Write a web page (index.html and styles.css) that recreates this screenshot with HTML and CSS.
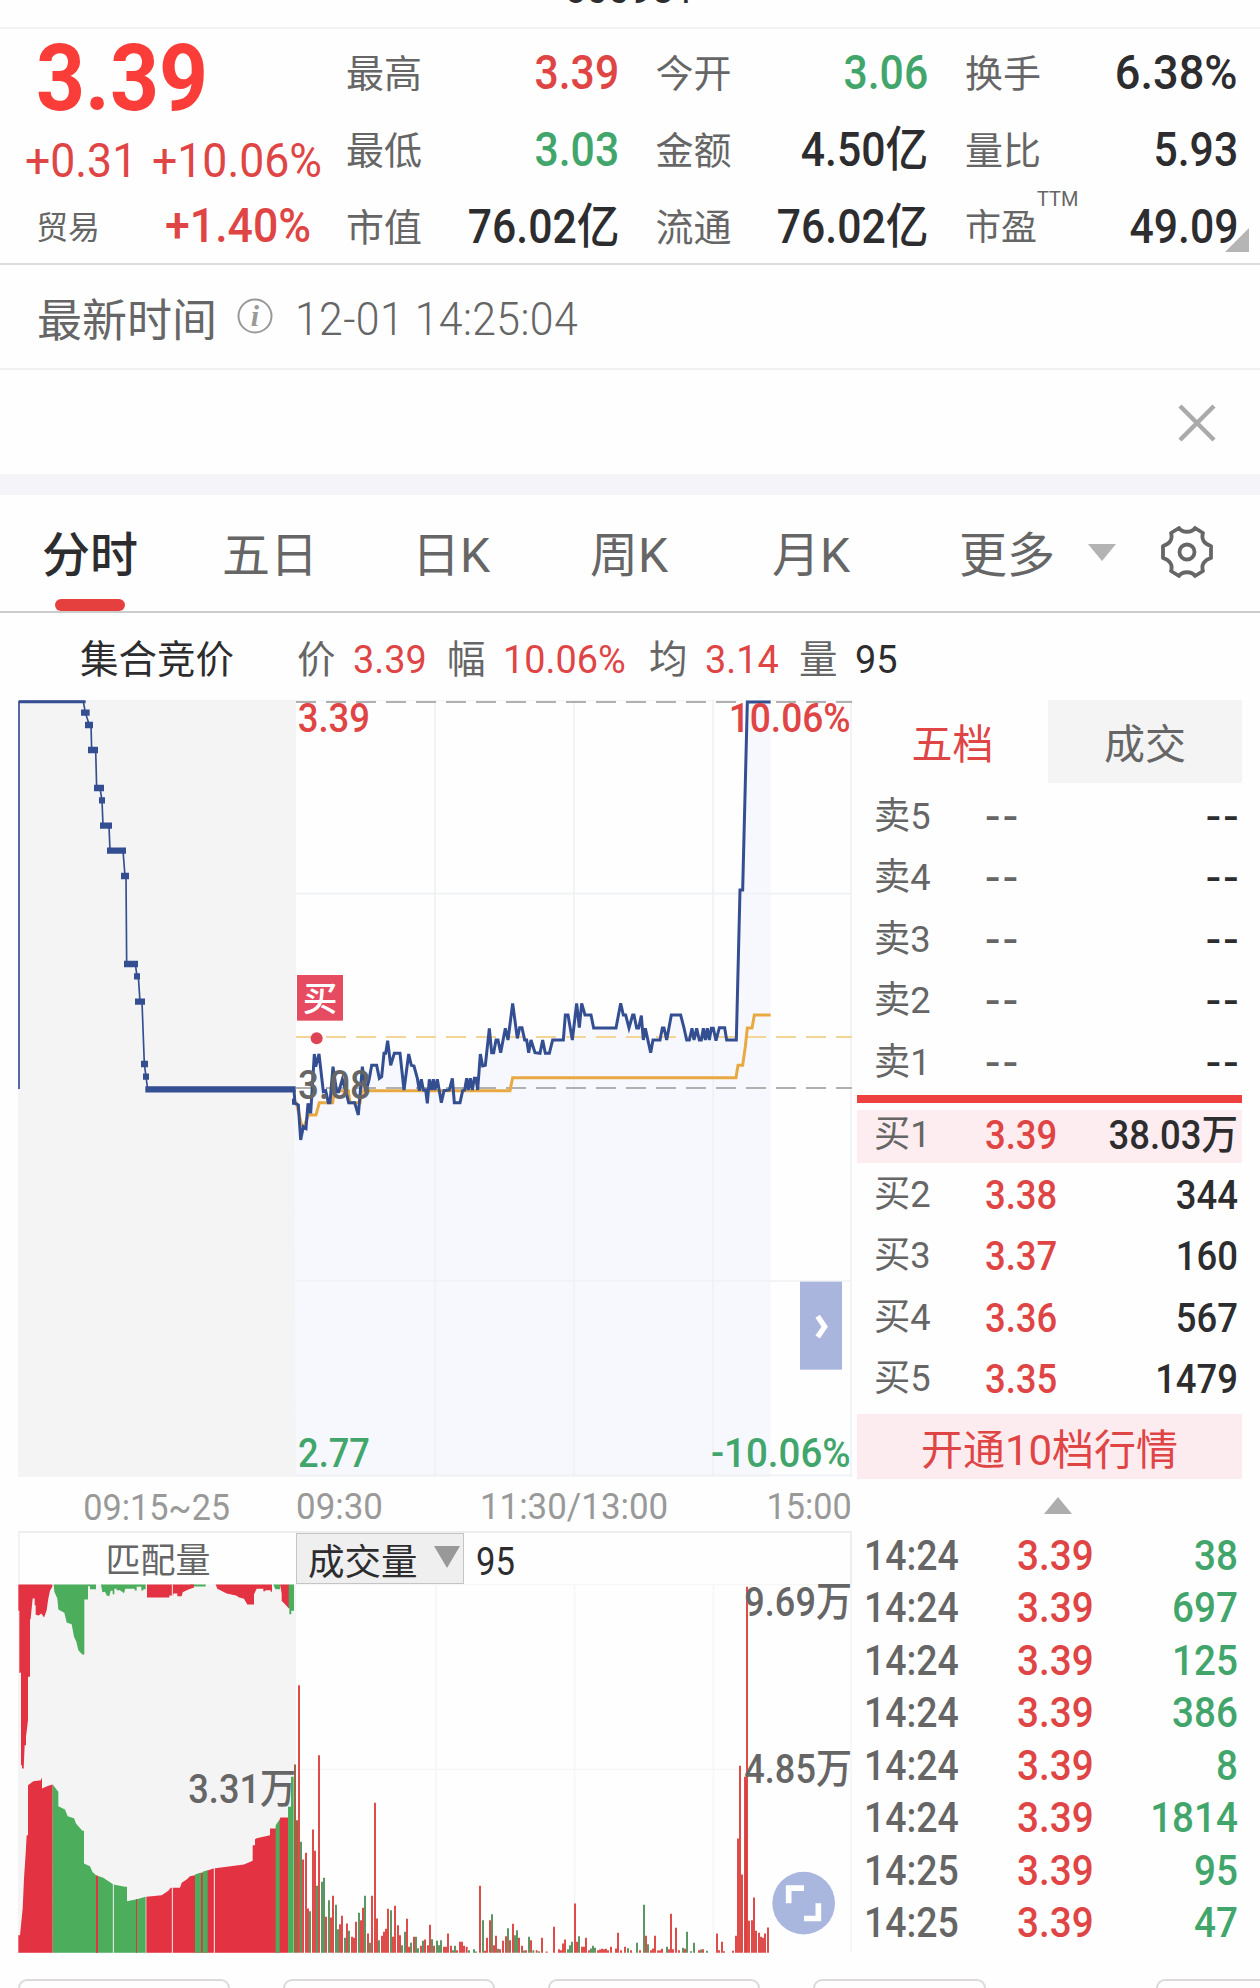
FILE: index.html
```
<!DOCTYPE html>
<html lang="zh-CN">
<head>
  <meta charset="UTF-8" />
  <meta name="viewport" content="width=device-width, initial-scale=1" />
  <title>600981 分时</title>
  <link rel="stylesheet" href="styles.css">
</head>
<body>

  <header class="code-bar"><span class="code">600981</span></header>

  <section class="quote">
    <div class="price-box">
      <div class="price"><span class="num">3.39</span></div>
      <div class="change"><span class="num">+0.31</span><span class="num">+10.06%</span></div>
      <div class="sector"><span>贸易</span><span class="num">+1.40%</span></div>
    </div>
    <div class="stats">
      <div class="stat"><span>最高</span><b class="num up">3.39</b></div>
      <div class="stat"><span>今开</span><b class="num down">3.06</b></div>
      <div class="stat"><span>换手</span><b class="num pct">6.38%</b></div>
      <div class="stat"><span>最低</span><b class="num down">3.03</b></div>
      <div class="stat"><span>金额</span><b class="num">4.50亿</b></div>
      <div class="stat"><span>量比</span><b class="num">5.93</b></div>
      <div class="stat"><span>市值</span><b class="num">76.02亿</b></div>
      <div class="stat"><span>流通</span><b class="num">76.02亿</b></div>
      <div class="stat pe"><span>市盈<sup>TTM</sup></span><b class="num">49.09</b></div>
    </div>
    <i class="corner"></i>
  </section>

  <section class="latest">
    <span>最新时间</span>
    <svg class="info" viewBox="0 0 36 36"><circle cx="18" cy="18" r="16.5" /><text x="18" y="28">i</text></svg>
    <span class="num">12-01 14:25:04</span>
  </section>

  <section class="notice">
    <svg class="close" viewBox="0 0 38 38"><path d="M2 2L36 36M36 2L2 36" /></svg>
  </section>

  <nav class="tabs">
    <a class="tab active">分时</a>
    <a class="tab">五日</a>
    <a class="tab">日K</a>
    <a class="tab">周K</a>
    <a class="tab">月K</a>
    <a class="tab more">更多</a>
    <i class="arrow-down"></i>
    <svg class="gear" viewBox="0 0 52 52">
      <path d="M18 2C21 7 31 7 34 2L42 7C40 13 43 18 50 20V32C43 34 40 39 42 45L34 50C31 45 21 45 18 50L10 45C12 39 9 34 2 32V20C9 18 12 13 10 7Z" />
      <circle cx="26" cy="26" r="7.5" />
    </svg>
  </nav>

  <div class="summary">
    <span class="auction">集合竞价</span>
    <span class="key">价</span><span class="num up w-price">3.39</span>
    <span class="key">幅</span><span class="num up w-pct">10.06%</span>
    <span class="key">均</span><span class="num up w-price">3.14</span>
    <span class="key">量</span><span class="num">95</span>
  </div>

  <main class="main">
    <div class="charts">
      <svg class="price-chart" viewBox="-786 -780 2502 2331">
        <rect class="auction-bg" x="-786" y="-780" width="834" height="2331" />
        <path class="area" id="area" />
        <path class="grid" d="M465-780V1551M882-780V1551M1299-780V1551M1713-780V1551M48-199H1713M48 963H1713M48 1546H1713M-786-780H1713" />
        <path class="dash" d="M48-774H1716M48 384H1716" />
        <path class="dash cost" d="M48 231H1716" />
        <polyline class="avg" points="48,425 65,495 72,500 85,465 108,465 118,428 158,428 162,392 205,392 210,428 240,428 247,392 690,392 698,353 1368,353 1374,316 1388,316 1396,260 1402,204 1416,204 1423,165 1472,165" />
        <polyline class="line auction-line" points="-783,387 -783,-775 -590,-775 -584,-742 -572,-705 -567,-705 -565,-630 -553,-630 -550,-516 -540,-516 -534,-479 -531,-403 -513,-403 -510,-328 -471,-328 -465,-252 -462,-252 -460,12 -434,12 -429,49 -425,49 -420,125 -414,125 -407,312 -402,350 -397,388" />
        <path class="line auction-dots" d="M-597-742h26M-585-705h24M-576-630h30M-558-516h30M-543-479h18M-540-403h36M-519-328h57M-477-252h24M-468 12h42M-438 49h18M-435 125h30M-417 312h21M-411 350h18M-404 388H47M36 425h12" />
        <polyline class="line" id="line" />
        <path class="line" d="M-783-775H-583" />
        <rect class="buy-tag" x="51" y="45" width="138" height="137" />
        <text class="buy-text" x="120" y="153">买</text>
        <circle class="buy-dot" cx="110" cy="235" r="18" />
        <text class="label up" x="53" y="-684" textLength="217" lengthAdjust="spacingAndGlyphs">3.39</text>
        <text class="label up" x="1346" y="-684" textLength="366" lengthAdjust="spacingAndGlyphs">10.06%</text>
        <text class="label" x="54" y="416" textLength="219" lengthAdjust="spacingAndGlyphs">3.08</text>
        <text class="label down" x="54" y="1521" textLength="216" lengthAdjust="spacingAndGlyphs">2.77</text>
        <text class="label down" x="1293" y="1521" textLength="419" lengthAdjust="spacingAndGlyphs">-10.06%</text>
        <rect class="handle" x="1560" y="965" width="126" height="264" />
        <path class="handle-arrow" d="M1613 1069L1634 1100L1613 1131" />
      </svg>

      <div class="axis">
        <span class="num auction-time">09:15~25</span>
        <div class="times"><span class="num">09:30</span><span class="num mid">11:30/13:00</span><span class="num">15:00</span></div>
      </div>

      <div class="volume-head">
        <span class="match">匹配量</span>
        <span class="select">成交量<i></i></span>
        <span class="num volume-now">95</span>
      </div>

      <svg class="volume-chart" viewBox="-786 342 2502 1106">
        <rect class="auction-bg" x="-786" y="342" width="834" height="1106" />
        <path class="grid" d="M468 342V1448M884 342V1448M1300 342V1448M1713 342V1448M48 898H1713M-786 343H1713" />
        <g transform="translate(-840 0)">
          <path class="red" d="M55 343H157V350L150 362L145 385L140 420L132 442L124 430L116 436L107 434V405H104V385H98L92 445L90 450V620H84V750L78 800V825H74L71 895H66V885H63V608H58V422H55Z" />
          <path class="green" d="M161 343H288V357H270V348H264V388H253V553H247L235 540L229 515L222 500L215 462L200 457L193 428L175 418L172 385L163 365ZM303 343H437V357H430V361H424V350H410V361H404V356H376L372 369L360 360H350V356H343V372H338V362H332L328 378L320 376L315 365L307 366ZM570 343H617V349H570ZM820 343H840V357H826Z" />
          <path class="red" d="M441 343H582V352L565 358L548 366L545 378H532V370H520V376H508V382H441ZM647 343H816V365H812V360H796V363H790V356H770L762 372V403H742L732 386L718 382L708 376L680 370L652 356ZM840 343H867V415L855 402L845 392V370Z" />
          <path class="green" d="M866 343H882V422H874V432H868V414H866Z" />
          <path class="red" d="M55 1448V1395H60L68 1315L72 1225L77 1150L80 1095H84V945L100 933L123 930V925H126V955L145 947L158 943V1448Z" />
          <path class="green" d="M158 1448V943L175 965V1008L195 1018L203 1038L222 1044L228 1060L247 1082H252V1180L270 1188L277 1205L288 1215L310 1223L340 1243L375 1250H381V1293L410 1287L437 1280V1448Z" />
          <path class="red" d="M439 1448V1280L485 1275L505 1262L512 1253H540L545 1238L560 1228L570 1218L585 1215L625 1200L640 1195L732 1183L758 1172V1125H765V1107L770 1104L810 1095V1075H827L839 1048L841 1042H864V1448ZM288 1448V1217H294V1448ZM408 1448V1287H411V1448Z" />
          <path class="green" d="M585 1448V1213L603 1207V1448ZM608 1448V1205L623 1200V1448ZM827 1448V1065L839 1048V1448ZM864 1448V1010H873V920H881V1448Z" />
          <path class="split" d="M340 1448V1242M517 1448V1250M643 1448V1192M517 343V380" />
          <path class="mixed" d="M885 1448V883M891 1448V1050" />
        </g>
        <path class="bars-up" id="bars-up" />
        <path class="bars-down" id="bars-down" />
        <text class="label" x="-275" y="1000" textLength="323" lengthAdjust="spacingAndGlyphs">3.31万</text>
        <text class="label" x="1393" y="439" textLength="323" lengthAdjust="spacingAndGlyphs">9.69万</text>
        <text class="label" x="1393" y="939" textLength="323" lengthAdjust="spacingAndGlyphs">4.85万</text>
        <circle class="full" cx="1571" cy="1299" r="94" />
        <path class="full-icon" d="M1526 1299V1254H1572M1615 1299V1345H1572" />
      </svg>
    </div>

    <aside class="book">
      <div class="book-tabs"><span class="on">五档</span><span>成交</span></div>
      <div class="level ask"><span>卖5</span><em>--</em><b>--</b></div>
      <div class="level ask"><span>卖4</span><em>--</em><b>--</b></div>
      <div class="level ask"><span>卖3</span><em>--</em><b>--</b></div>
      <div class="level ask"><span>卖2</span><em>--</em><b>--</b></div>
      <div class="level ask"><span>卖1</span><em>--</em><b>--</b></div>
      <div class="divider"></div>
      <div class="level bid first"><span>买1</span><em>3.39</em><b>38.03万</b></div>
      <div class="level bid"><span>买2</span><em>3.38</em><b>344</b></div>
      <div class="level bid"><span>买3</span><em>3.37</em><b>160</b></div>
      <div class="level bid"><span>买4</span><em>3.36</em><b>567</b></div>
      <div class="level bid"><span>买5</span><em>3.35</em><b>1479</b></div>
      <div class="open-ten">开通10档行情</div>
      <div class="collapse"><i></i></div>
      <div class="trade"><span>14:24</span><em>3.39</em><b>38</b></div>
      <div class="trade"><span>14:24</span><em>3.39</em><b>697</b></div>
      <div class="trade"><span>14:24</span><em>3.39</em><b>125</b></div>
      <div class="trade"><span>14:24</span><em>3.39</em><b>386</b></div>
      <div class="trade"><span>14:24</span><em>3.39</em><b>8</b></div>
      <div class="trade"><span>14:24</span><em>3.39</em><b>1814</b></div>
      <div class="trade"><span>14:25</span><em>3.39</em><b>95</b></div>
      <div class="trade"><span>14:25</span><em>3.39</em><b>47</b></div>
    </aside>
  </main>

  <footer class="indicators"><i></i><i></i><i></i><i class="short"></i><i class="last"></i></footer>

  <script src="chart.js"></script>
</body>
</html>
```
FILE: styles.css
```
* {
  box-sizing: border-box;
}

body {
  margin: 0;
  width: 1260px;
  height: 1988px;
  overflow: hidden;
  background: #fefefe;
  color: #2d2d2f;
  font-family: Roboto, "Noto Sans CJK SC", sans-serif;
}

i, em {
  font-style: normal;
}

/* condensed figures */
.num {
  display: inline-block;
  font-weight: 500;
  white-space: nowrap;
  transform: scaleX(0.91);
  transform-origin: right center;
}

.up {
  color: #e04545;
  fill: #e04545;
}

.down {
  color: #42a66c;
  fill: #42a66c;
}

.code-bar {
  height: 29px;
  display: flex;
  justify-content: center;
  align-items: flex-end;
  padding-bottom: 20px;
  border-bottom: 2px solid #f2f2f2;
}

.code {
  font-size: 39px;
  line-height: 27px;
  height: 30px;
}

.quote {
  position: relative;
  display: flex;
  height: 236px;
  padding-top: 4px;
  border-bottom: 2px solid #dcdcdc;
}

.price-box {
  width: 346px;
  color: #e04545;
}

.price-box .num {
  transform-origin: left center;
}

.price {
  height: 86px;
  padding-left: 36px;
  font-size: 93px;
  line-height: 91px;
  color: #fb3d39;
}

.price .num {
  font-weight: 700;
  transform: scaleX(0.92);
}

.change {
  display: flex;
  height: 82px;
  padding-left: 25px;
  font-size: 49px;
  line-height: 84px;
}

.change .num {
  width: 127px;
  font-weight: 400;
}

.sector {
  display: flex;
  padding-left: 36px;
  font-size: 32px;
  line-height: 54px;
  color: #666;
}

.sector .num {
  margin-left: 65px;
  font-size: 48px;
  line-height: 49px;
  color: #e04545;
  transform: scaleX(0.93);
}

.stats {
  display: grid;
  grid-template-columns: repeat(3, 273px);
  grid-auto-rows: 77px;
  column-gap: 36.5px;
}

.stat {
  display: flex;
  justify-content: space-between;
  font-size: 38px;
  line-height: 82px;
  color: #666;
  white-space: nowrap;
}

.stat .num {
  font-size: 48px;
  line-height: 79px;
  transform: scaleX(0.89);
}

.stat .pct {
  transform: scaleX(0.94);
}

.stat .num:not(.up):not(.down) {
  color: #2d2d2f;
}

.stat sup {
  position: absolute;
  margin-top: -29px;
  font-size: 20px;
}

.pe > span {
  font-size: 36px;
}

.corner {
  position: absolute;
  right: 11px;
  bottom: 11px;
  border-left: 24px solid transparent;
  border-bottom: 24px solid #b5b5b5;
}

.latest {
  display: flex;
  align-items: center;
  height: 105px;
  padding: 2px 0 0 37px;
  font-size: 45px;
  color: #666;
  border-bottom: 2px solid #f0f0f0;
}

.latest .num {
  margin: 1px 0 0 22px;
  font-size: 47px;
  font-weight: 300;
  letter-spacing: 0.4px;
  transform-origin: left center;
}

.info {
  width: 36px;
  height: 36px;
  margin: -3px 0 0 20px;
  fill: none;
  stroke: #999;
  stroke-width: 2;
}

.info text {
  font: italic 700 30px "Liberation Serif", serif;
  text-anchor: middle;
  fill: #999;
  stroke: none;
}

.notice {
  display: flex;
  justify-content: flex-end;
  align-items: center;
  height: 125px;
  padding-right: 44px;
  border-bottom: 21px solid #f4f4f9;
}

.close {
  width: 38px;
  height: 38px;
  margin-top: 2px;
  stroke: #aaa;
  stroke-width: 4.5;
}

.tabs {
  display: flex;
  align-items: center;
  height: 118px;
  padding: 0 45px 0 42px;
  font-size: 48px;
  color: #666;
  border-bottom: 2px solid #ccc;
}

.tab {
  width: 182px;
  height: 116px;
  line-height: 122px;
}

.tab.active {
  position: relative;
  width: 180px;
  font-weight: 500;
  color: #2d2d2f;
}

.tab.active::after {
  content: "";
  position: absolute;
  left: 13px;
  bottom: 0;
  width: 70px;
  height: 12px;
  border-radius: 6px;
  background: #e5403d;
}

.tab:nth-child(2) {
  width: 190px;
}

.tab:nth-child(3) {
  width: 178px;
}

.tab:nth-child(5) {
  width: 187px;
}

.tab.more {
  width: 129px;
}

.arrow-down {
  margin-top: -1px;
  border: 14px solid transparent;
  border-top: 17px solid #b3b3b3;
  border-bottom: 0;
}

.gear {
  width: 52px;
  height: 52px;
  margin: -2px 0 0 45px;
  fill: none;
  stroke: #666;
  stroke-width: 3.8;
  stroke-linejoin: round;
}

.summary {
  display: flex;
  align-items: center;
  height: 87px;
  padding: 6px 0 0 80px;
  font-size: 38.5px;
  white-space: nowrap;
}

.summary .auction {
  width: 217px;
  margin-top: -7px;
}

.summary .key {
  width: 56px;
  margin-top: -7px;
  color: #666;
}

.summary .num {
  font-size: 39px;
  font-weight: 400;
  transform: scaleX(0.97);
  transform-origin: left center;
}

.w-price {
  width: 94px;
}

.w-pct {
  width: 146px;
}

.main {
  display: flex;
  height: 1279px;
  padding-left: 18px;
}

.charts {
  width: 834px;
  margin-right: 5px;
}

.charts svg {
  display: block;
}

.price-chart {
  width: 834px;
  height: 777px;
}

.volume-chart {
  width: 834px;
  height: 369px;
}

.auction-bg {
  fill: #f4f4f4;
}

.area {
  fill: #f6f8fd;
}

.grid {
  fill: none;
  stroke: #f0f1f4;
  stroke-width: 5;
}

.volume-chart .grid {
  stroke: #f5f7f7;
}

.dash {
  fill: none;
  stroke: #b0b0b0;
  stroke-width: 6;
  stroke-dasharray: 60 30;
}

.dash.cost {
  stroke: #f3d695;
}

.avg {
  fill: none;
  stroke: #e9a942;
  stroke-width: 9;
}

.line {
  fill: none;
  stroke: #344e92;
  stroke-width: 9;
}

.auction-line {
  stroke-width: 5;
}

.auction-dots {
  stroke-width: 19;
}

.label {
  font-size: 122px;
  font-weight: 500;
}

.label:not(.up):not(.down) {
  fill: #666;
}

.buy-tag {
  fill: #e64c61;
}

.buy-text {
  font-size: 104px;
  font-weight: 500;
  text-anchor: middle;
  fill: #fff;
}

.buy-dot {
  fill: #dc4456;
}

.handle {
  fill: #aab5de;
}

.handle-arrow {
  fill: none;
  stroke: #fff;
  stroke-width: 16;
}

.red {
  fill: #e33241;
}

.green {
  fill: #4cad5c;
}

.split {
  stroke: #f4f4f4;
  stroke-width: 3;
}

.mixed {
  stroke: #a06443;
  stroke-width: 6;
}

.bars-up,
.bars-down {
  fill: none;
  stroke: #dc403e;
  stroke-width: 5.6;
}

.bars-down {
  stroke: #508f58;
}

.full {
  fill: #a9b7df;
}

.full-icon {
  fill: none;
  stroke: #fff;
  stroke-width: 17;
}

.axis {
  display: flex;
  height: 56px;
  font-size: 36px;
  line-height: 63px;
  color: #999;
  border-bottom: 2px solid #eee;
}

.axis .num {
  font-weight: 400;
  transform: scaleX(0.95);
}

.auction-time {
  width: 278px;
  padding-left: 54px;
}

.times {
  display: flex;
  justify-content: space-between;
  width: 556px;
  line-height: 61px;
}

.times .num:first-child {
  transform: scaleX(0.97);
  transform-origin: left center;
}

.times .mid {
  transform: scaleX(0.97);
  transform-origin: center;
}

.volume-head {
  display: flex;
  height: 51px;
  font-size: 35px;
  line-height: 58px;
  border-right: 2px solid #eee;
  border-left: 2px solid #f2f2f2;
}

.match {
  width: 276px;
  text-align: center;
  color: #666;
}

.select {
  display: flex;
  justify-content: space-between;
  width: 168px;
  padding: 0 3px 0 11px;
  font-size: 36.5px;
  background: #efefef;
  border: 1px solid #c4c4c4;
}

.select i {
  height: 22px;
  margin-top: 12px;
  border: 13px solid transparent;
  border-top: 22px solid #999;
  border-bottom: 0;
}

.volume-now {
  margin-left: 12px;
  font-size: 38px;
  font-weight: 400;
  transform-origin: left center;
}

.book {
  width: 385px;
}

.book-tabs {
  display: grid;
  grid-template-columns: 191px 194px;
  height: 83px;
  font-size: 41px;
  line-height: 91px;
  text-align: center;
  color: #666;
}

.book-tabs span {
  height: 83px;
  background: #f4f4f4;
}

.book-tabs .on {
  color: #e04545;
  background: none;
}

.level {
  display: grid;
  grid-template-columns: 111px 80px 1fr;
  height: 61.4px;
  padding: 0 4px 0 17px;
  font-size: 37px;
  line-height: 68px;
  white-space: nowrap;
}

.level span {
  color: #666;
  font-weight: 400;
  transform: scaleX(0.98);
  transform-origin: left center;
}

.level em,
.level b {
  font-size: 40.5px;
  font-weight: 500;
  transform: scaleX(0.9);
  transform-origin: left center;
}

.level b {
  text-align: right;
  transform-origin: right center;
}

.level em {
  color: #e04545;
}

.ask em {
  color: #666;
}

.ask em,
.ask b {
  letter-spacing: 2px;
  transform: scaleX(1.12);
}

.ask b {
  margin-right: -3px;
}

.divider {
  height: 8px;
  margin: 5px 0 7px;
  background: #ef4040;
}

.level.first {
  height: 53px;
  line-height: 50px;
  background: #fdedf0;
}

.bid {
  line-height: 64px;
}

.open-ten {
  height: 65px;
  margin-top: 5px;
  font-size: 42px;
  line-height: 74px;
  text-align: center;
  color: #e04545;
  background: #fdecef;
}

.collapse {
  display: flex;
  justify-content: center;
  height: 50px;
  padding: 18px 0 0 17px;
}

.collapse i {
  height: 17px;
  border: 14px solid transparent;
  border-bottom: 17px solid #adadad;
  border-top: 0;
}

.trade {
  display: grid;
  grid-template-columns: 153px 90px 1fr;
  height: 52.5px;
  padding: 0 4px 0 7px;
  font-size: 42px;
  line-height: 53px;
}

.trade span,
.trade em,
.trade b {
  font-weight: 500;
  color: #666;
  transform: scaleX(0.92);
  transform-origin: left center;
}

.trade span {
  transform: scaleX(0.89);
}

.trade em {
  color: #e04545;
}

.trade b {
  color: #42a66c;
  text-align: right;
  transform-origin: right center;
}

.indicators {
  display: flex;
  gap: 53px;
  padding-left: 18px;
}

.indicators i {
  flex: none;
  width: 212px;
  height: 60px;
  border: 2px solid #dedadc;
  border-radius: 9px;
}

.indicators .short {
  width: 173px;
}

.indicators .last {
  width: 104px;
  margin-left: 117px;
  border-right: 0;
  border-radius: 9px 0 0 9px;
}
```
FILE: chart.js
```
// intraday price, x/y in chart units
const prices = [
  [42, 390], [45, 430], [55, 435], [62, 540], [70, 500], [78, 505], [84, 430], [92, 460], [103, 282], [107, 320],
  [117, 282], [130, 395], [137, 392], [145, 428], [150, 428], [159, 320], [170, 395], [176, 395], [187, 358],
  [198, 395], [206, 428], [224, 428], [235, 465], [247, 320], [258, 395], [268, 355], [275, 316], [290, 316],
  [298, 355], [305, 350], [312, 280], [317, 280], [323, 242], [332, 316], [343, 280], [360, 280], [372, 390],
  [386, 282], [394, 316], [402, 318], [412, 355], [418, 392], [424, 358], [430, 390], [437, 390], [442, 430],
  [448, 358], [455, 390], [460, 358], [465, 390], [472, 358], [484, 428], [492, 392], [508, 390], [517, 355],
  [523, 428], [540, 428], [548, 392], [554, 390], [560, 355], [565, 390], [571, 355], [577, 390], [583, 355],
  [588, 355], [593, 390], [601, 282], [608, 318], [616, 316], [628, 205], [635, 278], [641, 278], [648, 240],
  [654, 240], [662, 278], [676, 205], [684, 240], [698, 130], [712, 235], [719, 203], [726, 203], [734, 240],
  [740, 240], [746, 278], [753, 240], [765, 278], [780, 280], [788, 240], [796, 280], [808, 280], [818, 240],
  [850, 240], [856, 165], [864, 165], [877, 240], [890, 130], [898, 203], [905, 130], [915, 165], [933, 165],
  [941, 204], [1008, 204], [1022, 130], [1030, 165], [1037, 165], [1047, 204], [1058, 165], [1062, 165],
  [1070, 204], [1076, 204], [1084, 167], [1090, 240], [1096, 205], [1112, 278], [1119, 240], [1140, 240],
  [1147, 204], [1152, 204], [1160, 240], [1174, 165], [1202, 165], [1212, 204], [1220, 240], [1228, 240],
  [1236, 205], [1242, 240], [1250, 205], [1258, 240], [1264, 240], [1270, 205], [1276, 240], [1282, 205],
  [1288, 240], [1294, 205], [1300, 205], [1308, 242], [1318, 203], [1334, 203], [1340, 240], [1369, 240],
  [1380, -210], [1388, -210], [1402, -774], [1472, -774]
];

const points = prices.map(p => p.join(',')).join(' ');
document.getElementById('line').setAttribute('points', points);
document.getElementById('area').setAttribute('d', 'M48 1551L' + points + 'V1551Z');

// minute volume: x, top
const up = [
  [57, 645], [69, 1168], [78, 1148], [84, 1315], [99, 1078], [105, 1142], [117, 855], [138, 1340], [153, 1342],
  [159, 1277], [180, 1362], [186, 1337], [201, 1360], [216, 1400], [222, 1403], [228, 1355], [243, 1350],
  [249, 1313], [264, 1390], [276, 1277], [285, 998], [291, 1345], [306, 1397], [312, 1385], [318, 1376],
  [324, 1316], [339, 1400], [345, 1307], [354, 1365], [360, 1395], [381, 1346], [387, 1430], [402, 1400],
  [423, 1427], [435, 1408], [444, 1425], [450, 1364], [462, 1427], [492, 1430], [498, 1430], [504, 1390],
  [513, 1427], [531, 1440], [540, 1415], [546, 1415], [552, 1427], [560, 1430], [600, 1247], [615, 1442],
  [621, 1403], [630, 1350], [642, 1425], [648, 1397], [660, 1437], [669, 1412], [678, 1398], [690, 1410],
  [699, 1361], [717, 1403], [726, 1427], [738, 1440], [753, 1410], [770, 1440], [786, 1403], [800, 1444],
  [822, 1370], [837, 1437], [843, 1440], [849, 1420], [855, 1408], [885, 1300], [891, 1415], [906, 1430],
  [912, 1430], [918, 1403], [927, 1440], [954, 1440], [960, 1438], [966, 1436], [972, 1437], [978, 1436],
  [984, 1440], [993, 1430], [1008, 1435], [1014, 1388], [1023, 1440], [1035, 1430], [1053, 1440], [1080, 1440],
  [1098, 1397], [1113, 1440], [1119, 1435], [1125, 1397], [1134, 1441], [1140, 1440], [1146, 1436], [1167, 1437],
  [1173, 1331], [1179, 1437], [1188, 1373], [1197, 1440], [1215, 1436], [1257, 1440], [1269, 1437], [1311, 1390],
  [1317, 1440], [1326, 1415], [1332, 1443], [1359, 1442], [1368, 1397], [1374, 1105], [1380, 887], [1386, 1213],
  [1395, 920], [1401, 350], [1400, 930], [1407, 1352], [1416, 1350], [1422, 1282], [1428, 1382], [1437, 1388],
  [1443, 1400], [1449, 1403], [1455, 1390], [1464, 1372]
];

const down = [
  [63, 1115], [90, 1323], [111, 1247], [126, 1235], [132, 1223], [147, 1290], [168, 1304], [174, 1377],
  [195, 1403], [207, 1382], [237, 1328], [255, 1277], [270, 1418], [297, 1410], [333, 1320], [366, 1425],
  [375, 1385], [393, 1418], [408, 1400], [414, 1434], [429, 1412], [456, 1407], [471, 1412], [477, 1425],
  [483, 1410], [519, 1440], [525, 1427], [567, 1440], [582, 1437], [588, 1444], [609, 1350], [636, 1332],
  [654, 1436], [684, 1374], [705, 1395], [711, 1380], [732, 1441], [747, 1400], [760, 1440], [777, 1443],
  [864, 1437], [870, 1425], [876, 1415], [897, 1398], [933, 1435], [939, 1427], [945, 1433], [1044, 1434],
  [1071, 1418], [1092, 1304], [1104, 1422], [1161, 1430], [1209, 1433], [1221, 1385], [1233, 1443], [1242, 1418],
  [1263, 1438], [1281, 1442]
];

const bars = list => list.map(([x, top]) => `M${x} 1448V${top}`).join('');
document.getElementById('bars-up').setAttribute('d', bars(up));
document.getElementById('bars-down').setAttribute('d', bars(down));
```
